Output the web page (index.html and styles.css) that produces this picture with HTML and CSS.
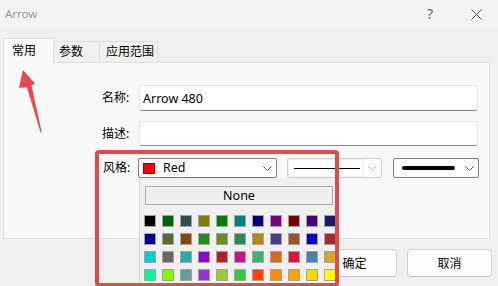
FILE: index.html
```html
<!DOCTYPE html>
<html>
<head>
<meta charset="utf-8">
<link rel="stylesheet" href="styles.css">
</head>
<body>
<div class="window">
  <div class="titlebar">
    <span class="title">Arrow</span>
    <span class="help">?</span>
    <svg class="close" width="11" height="11" viewBox="0 0 11 11"><path d="M0.5 0.5 L10.5 10.5 M10.5 0.5 L0.5 10.5" stroke="#555" stroke-width="1" fill="none"/></svg>
  </div>
  <div class="tabs">
    <div class="tab active">常用</div>
    <div class="tab t2">参数</div>
    <div class="tab t3">应用范围</div>
  </div>
  <div class="panel">
    <div class="form">
      <div class="row r1"><span class="lbl">名称:</span><div class="input">Arrow 480</div></div>
      <div class="row r2"><span class="lbl">描述:</span><div class="input"></div></div>
      <div class="row r3"><span class="lbl">风格:</span>
        <div class="combo c1">
          <span class="swatch"></span><span class="ctext">Red</span>
          <svg class="chev" width="9" height="5" viewBox="0 0 9 5"><path d="M0.5 0.5 L4.5 4.5 L8.5 0.5" stroke="#555" fill="none"/></svg>
        </div>
        <div class="combo c2">
          <div class="linebox"><span class="thin"></span></div>
          <svg class="chev" width="9" height="5" viewBox="0 0 9 5"><path d="M0.5 0.5 L4.5 4.5 L8.5 0.5" stroke="#bbb" fill="none"/></svg>
        </div>
        <div class="combo c3">
          <span class="thick"></span>
          <svg class="chev" width="9" height="5" viewBox="0 0 9 5"><path d="M0.5 0.5 L4.5 4.5 L8.5 0.5" stroke="#555" fill="none"/></svg>
        </div>
      </div>
    </div>
  </div>
  <div class="buttons">
    <button class="btn">确定</button>
    <button class="btn">取消</button>
  </div>
</div>

<div class="popup">
  <div class="none">None</div>
  <div class="grid">
    <span class="sq" style="background:#000000"></span>
    <span class="sq" style="background:#006400"></span>
    <span class="sq" style="background:#2F4F4F"></span>
    <span class="sq" style="background:#808000"></span>
    <span class="sq" style="background:#008000"></span>
    <span class="sq" style="background:#008080"></span>
    <span class="sq" style="background:#000080"></span>
    <span class="sq" style="background:#800080"></span>
    <span class="sq" style="background:#800000"></span>
    <span class="sq" style="background:#4B0082"></span>
    <span class="sq" style="background:#191970"></span>
    <span class="sq" style="background:#00008B"></span>
    <span class="sq" style="background:#556B2F"></span>
    <span class="sq" style="background:#8B4513"></span>
    <span class="sq" style="background:#228B22"></span>
    <span class="sq" style="background:#6B8E23"></span>
    <span class="sq" style="background:#2E8B57"></span>
    <span class="sq" style="background:#B8860B"></span>
    <span class="sq" style="background:#483D8B"></span>
    <span class="sq" style="background:#A0522D"></span>
    <span class="sq" style="background:#0000CD"></span>
    <span class="sq" style="background:#A52A2A"></span>
    <span class="sq" style="background:#00CED1"></span>
    <span class="sq" style="background:#696969"></span>
    <span class="sq" style="background:#20B2AA"></span>
    <span class="sq" style="background:#9400D3"></span>
    <span class="sq" style="background:#B22222"></span>
    <span class="sq" style="background:#C71585"></span>
    <span class="sq" style="background:#3CB371"></span>
    <span class="sq" style="background:#D2691E"></span>
    <span class="sq" style="background:#DC143C"></span>
    <span class="sq" style="background:#4682B4"></span>
    <span class="sq" style="background:#DAA520"></span>
    <span class="sq" style="background:#00FA9A"></span>
    <span class="sq" style="background:#7CFC00"></span>
    <span class="sq" style="background:#5F9EA0"></span>
    <span class="sq" style="background:#9932CC"></span>
    <span class="sq" style="background:#9ACD32"></span>
    <span class="sq" style="background:#32CD32"></span>
    <span class="sq" style="background:#FF4500"></span>
    <span class="sq" style="background:#FF8C00"></span>
    <span class="sq" style="background:#FFA500"></span>
    <span class="sq" style="background:#FFD700"></span>
    <span class="sq" style="background:#FFFF00"></span>
  </div>
</div>

<div class="highlight"></div>

<svg class="arrow" width="60" height="140" viewBox="0 0 60 140">
  <polygon points="23,70 35,83.5 31.5,85.5 41.8,132.5 40.6,132.5 27,87.5 19,87.8" fill="#e8474b"/>
</svg>
</body>
</html>
```

FILE: styles.css
```css
html, body {
  margin: 0;
  padding: 0;
}
body {
  width: 498px;
  height: 286px;
  overflow: hidden;
  position: relative;
  background: #f0f0f0;
  font-family: "Noto Sans", "Noto Sans CJK SC", sans-serif;
  font-size: 12px;
  color: #000;
}
.window {
  display: flex;
  flex-direction: column;
}
.titlebar {
  height: 28px;
  background: #f3f3f3;
  display: flex;
  align-items: center;
  padding-left: 5px;
  padding-right: 16px;
}
.title {
  flex: 1;
  color: #9b9b9b;
  font-size: 11.5px;
  line-height: 14px;
}
.help {
  width: 20px;
  text-align: center;
  color: #666;
  font-size: 14px;
  line-height: 14px;
  margin-right: 31px;
}
.close {
  display: block;
}
.tabs {
  height: 34px;
  display: flex;
  align-items: flex-end;
  padding-left: 3px;
}
.tab {
  box-sizing: border-box;
  height: 21px;
  display: flex;
  align-items: center;
  border: 1px solid #dedede;
  border-bottom: none;
  background: #f0f0f0;
  line-height: 14px;
}
.tab.active {
  height: 25px;
  width: 51px;
  padding-left: 8px;
  margin-bottom: -1px;
  background: #f9f9f9;
  position: relative;
  z-index: 1;
}
.tab.t2 {
  width: 46px;
  padding-left: 5px;
  border-left: none;
}
.tab.t3 {
  width: 58px;
  padding-left: 6px;
  border-left: none;
}
.panel {
  box-sizing: border-box;
  margin-left: 3px;
  width: 487px;
  height: 177px;
  border: 1px solid #dedede;
  background: #f9f9f9;
}
.form {
  padding-top: 22px;
  padding-left: 94px;
  display: flex;
  flex-direction: column;
}
.row {
  display: flex;
  align-items: center;
}
.r1 { height: 26px; }
.r2 { height: 25px; margin-top: 10px; }
.r3 { height: 20px; margin-top: 12px; }
.lbl {
  width: 41px;
  padding-left: 4px;
  box-sizing: border-box;
  line-height: 14px;
}
.r3 .lbl {
  width: 40px;
  padding-left: 5px;
}
.input {
  box-sizing: border-box;
  width: 339px;
  height: 100%;
  background: #fff;
  border: 1px solid #e6e6e6;
  border-bottom: 1px solid #878787;
  border-radius: 3px;
  padding-left: 3px;
  display: flex;
  align-items: center;
  font-size: 12.5px;
}
.combo {
  box-sizing: border-box;
  height: 20px;
  background: #fff;
  border: 1px solid #7f7f7f;
  border-radius: 2px;
  display: flex;
  align-items: center;
  position: relative;
}
.chev {
  position: absolute;
  top: 7px;
}
.c1 {
  width: 139px;
  padding-left: 4px;
}
.c1 .chev { right: 4px; }
.swatch {
  box-sizing: border-box;
  width: 12px;
  height: 11px;
  background: #ff0000;
  border: 1px solid #9a0000;
}
.ctext {
  margin-left: 8px;
  font-size: 12.5px;
  line-height: 14px;
}
.c2 {
  width: 95px;
  margin-left: 10px;
  border-color: #cfcfcf;
  padding-left: 0;
}
.c2 .chev { right: 4px; }
.linebox {
  box-sizing: border-box;
  width: 76px;
  height: 18px;
  border: 1px solid #f0f0f0;
  background: #fff;
  display: flex;
  align-items: center;
  padding-left: 5px;
}
.thin {
  display: block;
  width: 66px;
  height: 1px;
  background: #000;
}
.c3 {
  width: 86px;
  margin-left: 11px;
  padding-left: 8px;
}
.c3 .chev { right: 4px; }
.thick {
  display: block;
  width: 53px;
  height: 4px;
  border-radius: 2px;
  background: #000;
}
.buttons {
  display: flex;
  justify-content: flex-end;
  gap: 10px;
  padding-right: 6px;
  margin-top: 10px;
}
.btn {
  box-sizing: border-box;
  width: 85px;
  height: 28px;
  background: #fdfdfd;
  border: 1px solid #d3d3d3;
  border-bottom-color: #c2c2c2;
  border-radius: 4px;
  font-family: "Noto Sans", "Noto Sans CJK SC", sans-serif;
  font-size: 12px;
  color: #000;
  padding: 0;
}
.popup {
  position: absolute;
  left: 139px;
  top: 178px;
  width: 198px;
  height: 112px;
  box-sizing: border-box;
  background: #f0f0f0;
  border-left: 1px solid #d6d6d6;
  padding-top: 8px;
  padding-left: 5px;
}
.none {
  box-sizing: border-box;
  width: 188px;
  height: 19px;
  border: 1px solid #adadad;
  background: #efefef;
  display: flex;
  align-items: center;
  justify-content: center;
  font-size: 12.5px;
}
.grid {
  margin-top: 10px;
  margin-left: -1px;
  display: grid;
  grid-template-columns: repeat(11, 12px);
  grid-auto-rows: 12px;
  gap: 6px;
}
.sq {
  box-sizing: border-box;
  width: 12px;
  height: 12px;
  border: 1.5px solid #a3a3a3;
}
.highlight {
  position: absolute;
  left: 95px;
  top: 150px;
  width: 244px;
  height: 137px;
  box-sizing: border-box;
  border: 4px solid #e34a50;
  border-radius: 4px;
}
.arrow {
  position: absolute;
  left: 0;
  top: 0;
}
```
